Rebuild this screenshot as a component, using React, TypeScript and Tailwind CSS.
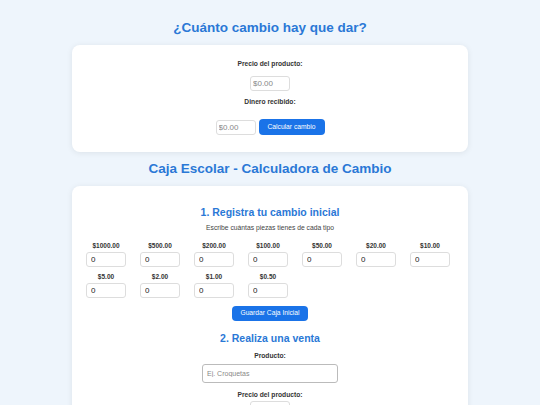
import { useState } from "react";

const denominations = [
  "1000.00",
  "500.00",
  "200.00",
  "100.00",
  "50.00",
  "20.00",
  "10.00",
  "5.00",
  "2.00",
  "1.00",
  "0.50",
];

const font = { fontFamily: '"Liberation Sans", Arial, sans-serif' };

export default function App() {
  const [counts, setCounts] = useState<Record<string, string>>(
    Object.fromEntries(denominations.map((d) => [d, "0"]))
  );

  return (
    <div
      className="min-h-screen bg-[#eef5fc] pt-[20px] pb-10 text-[#333]"
      style={font}
    >
      <h1 className="text-center text-[13.5px] leading-[16px] font-bold text-[#2a78d6]">
        ¿Cuánto cambio hay que dar?
      </h1>

      <div className="mx-auto mt-[9px] w-[396px] rounded-lg bg-white pt-[15px] pb-[17px] shadow-[0_1px_6px_rgba(0,0,0,0.08)] flex flex-col items-center">
        <label className="block text-[6.7px] leading-[8px] font-bold text-[#333]">
          Precio del producto:
        </label>
        <input
          placeholder="$0.00"
          className="mt-[8px] h-[15px] w-[40px] rounded-[3px] border border-[#ddd] px-[2px] text-[8px] text-[#333] placeholder:text-[#888] outline-none"
        />
        <label className="mt-[7px] block text-[6.7px] leading-[8px] font-bold text-[#333]">
          Dinero recibido:
        </label>
        <div className="mt-[13px] flex items-center gap-[3px]">
          <input
            placeholder="$0.00"
            className="h-[15px] w-[40px] rounded-[3px] border border-[#ddd] px-[2px] text-[8px] text-[#333] placeholder:text-[#888] outline-none"
          />
          <button className="h-[16px] w-[66px] rounded-[4px] bg-[#1a73e8] text-[6.7px] text-white">
            Calcular cambio
          </button>
        </div>
      </div>

      <h1 className="mt-[9px] text-center text-[13.5px] leading-[16px] font-bold text-[#2a78d6]">
        Caja Escolar - Calculadora de Cambio
      </h1>

      <div className="mx-auto mt-[9px] w-[396px] rounded-lg bg-white px-[14px] pt-[20px] pb-6 shadow-[0_1px_6px_rgba(0,0,0,0.08)] flex flex-col items-center">
        <h2 className="text-[10.5px] leading-[12px] font-bold text-[#2a78d6]">
          1. Registra tu cambio inicial
        </h2>
        <p className="mt-[6px] text-[6.75px] leading-[8px] text-[#444]">
          Escribe cuántas piezas tienes de cada tipo
        </p>

        <div className="mt-[10px] flex w-full flex-wrap gap-x-[14px] gap-y-[6px]">
          {denominations.map((d) => (
            <div key={d} className="flex w-[40px] flex-col items-center">
              <span className="text-[6.5px] leading-[8px] font-bold text-[#333]">
                ${d}
              </span>
              <input
                value={counts[d]}
                onChange={(e) => setCounts({ ...counts, [d]: e.target.value })}
                className="mt-[2px] h-[15px] w-[40px] rounded-[3px] border border-[#ddd] px-[4px] text-[8px] text-[#222] outline-none"
              />
            </div>
          ))}
        </div>

        <button className="mt-[8px] h-[15px] w-[76px] rounded-[4px] bg-[#1a73e8] text-[6.7px] text-white">
          Guardar Caja Inicial
        </button>

        <h2 className="mt-[11px] text-[10.5px] leading-[12px] font-bold text-[#2a78d6]">
          2. Realiza una venta
        </h2>
        <label className="mt-[8px] block text-[6.7px] leading-[8px] font-bold text-[#333]">
          Producto:
        </label>
        <input
          placeholder="Ej. Croquetas"
          className="mt-[4px] h-[19px] w-[136px] rounded-[3px] border border-[#bbb] px-[4px] text-[7px] text-[#333] placeholder:text-[#888] outline-none"
        />
        <label className="mt-[8px] block text-[6.7px] leading-[8px] font-bold text-[#333]">
          Precio del producto:
        </label>
        <input
          placeholder="$0.00"
          className="mt-[2px] h-[15px] w-[40px] rounded-[3px] border border-[#ddd] px-[2px] text-[8px] text-[#333] placeholder:text-[#888] outline-none"
        />
      </div>
    </div>
  );
}
